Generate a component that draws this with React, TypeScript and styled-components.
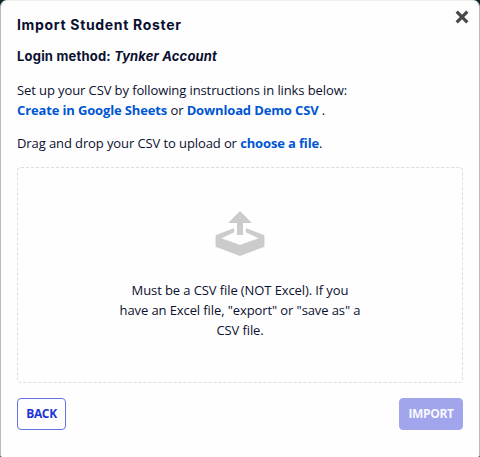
import React from 'react';
import styled, { createGlobalStyle } from 'styled-components';

const GlobalStyle = createGlobalStyle`
  * { box-sizing: border-box; }
  body { margin: 0; background: #10262b; }
`;

const Dialog = styled.main`
  width: 480px;
  height: 457px;
  padding: 13px 16px 0 16px;
  border: 1px solid #b9babb;
  border-top-color: #eeeeee;
  border-bottom: 0;
  border-radius: 7px 7px 2px 2px;
  background: #fefefe;
  color: #0b1030;
  font: 13px/20px 'Open Sans', sans-serif;
  letter-spacing: -0.1px;
  display: flex;
  flex-direction: column;
`;

const Header = styled.header`
  display: flex;
  justify-content: space-between;
  height: 31px;
`;

const Title = styled.h1`
  margin: 0;
  font: 700 14px/22px Inter, Montserrat, sans-serif;
  letter-spacing: 0.68px;
  white-space: nowrap;
`;

const CloseButton = styled.button`
  display: block;
  width: 14px;
  height: 14px;
  margin: -4px -6px 0 0;
  padding: 0;
  border: 0;
  background: none;
`;

const Method = styled.h2`
  margin: 0;
  font: 700 13px/22px Inter, Montserrat, sans-serif;
  letter-spacing: 0.2px;
  white-space: nowrap;
`;

const Account = styled.em`
  letter-spacing: 0.15px;
`;

const Paragraph = styled.p`
  margin: 13px 0 0;
  white-space: nowrap;
`;

const Link = styled.a`
  color: #0056d2;
  font-weight: 700;
  letter-spacing: -0.14px;
`;

const DropZone = styled.section`
  height: 216px;
  margin-top: 14px;
  padding-top: 43px;
  border: 1px dashed #dcdcdc;
  border-radius: 4px;
  display: flex;
  flex-direction: column;
  align-items: center;
`;

const Hint = styled.p`
  width: 244px;
  margin: 23px 0 0;
  text-align: center;
`;

const Actions = styled.footer`
  display: flex;
  justify-content: space-between;
  margin-top: 15px;
`;

const Button = styled.button<{ $primary?: boolean }>`
  width: ${({ $primary }) => ($primary ? 64 : 49)}px;
  height: 32px;
  padding: 0;
  border: 1px solid ${({ $primary }) => ($primary ? '#a1a5eb' : '#6672e2')};
  border-radius: 4px;
  background: ${({ $primary }) => ($primary ? '#a1a5eb' : '#fefefe')};
  color: ${({ $primary }) => ($primary ? '#f8f8ff' : '#1d35d5')};
  font: 700 12px/20px 'Open Sans', sans-serif;
  letter-spacing: -0.35px;
`;

export default function App() {
  return (
    <>
      <GlobalStyle />
      <Dialog>
        <Header>
          <Title>Import Student Roster</Title>
          <CloseButton aria-label="Close">
            <svg width="14" height="14" viewBox="0 0 14 14" display="block">
              <path d="M1.7 1.7 12.3 12.3M12.3 1.7 1.7 12.3" stroke="#484848" strokeWidth="3.2" />
            </svg>
          </CloseButton>
        </Header>
        <Method>
          Login method: <Account>Tynker Account</Account>
        </Method>
        <Paragraph>
          Set up your CSV by following instructions in links below:
          <br />
          <Link>Create in Google Sheets</Link> or <Link>Download Demo CSV</Link> .
        </Paragraph>
        <Paragraph>
          Drag and drop your CSV to upload or <Link>choose a file</Link>.
        </Paragraph>
        <DropZone>
          <svg width="50" height="46" viewBox="0 0 50 46" fill="#cbcbcb">
            <path d="M25 0 37 12H28V24H22V12H13Z" />
            <path d="M19.2 17V21.3L6.5 27.2 25 34 43.5 27.2 30.8 21.3V17L49.4 24.3V35.7L25 45 .6 35.7V24.3Z" />
          </svg>
          <Hint>Must be a CSV file (NOT Excel). If you have an Excel file, "export" or "save as" a CSV file.</Hint>
        </DropZone>
        <Actions>
          <Button>BACK</Button>
          <Button $primary>IMPORT</Button>
        </Actions>
      </Dialog>
    </>
  );
}
